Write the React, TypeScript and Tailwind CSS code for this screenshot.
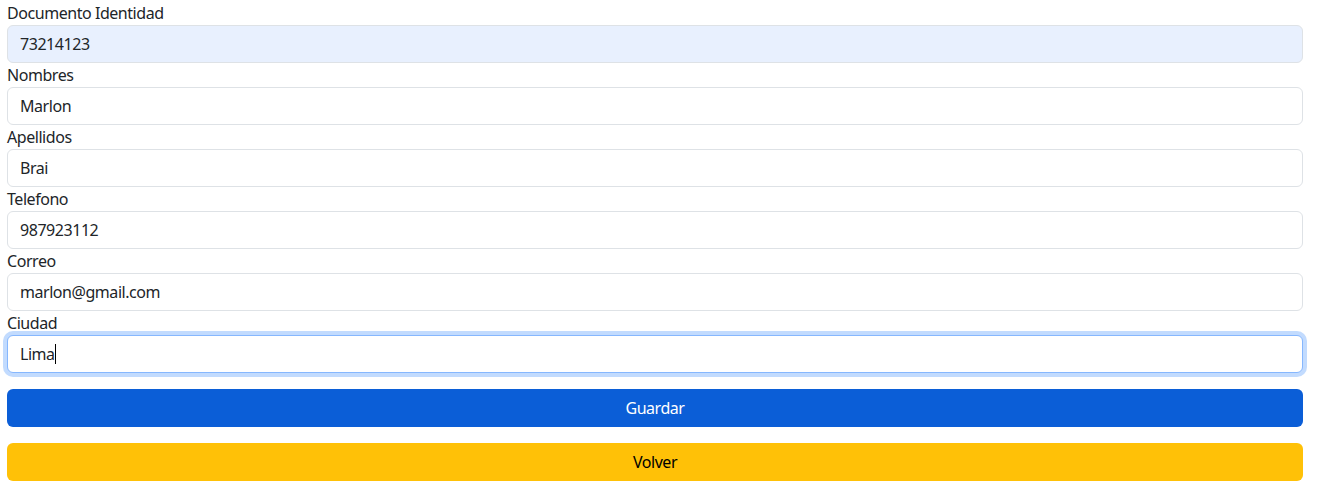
const fields = [
  { label: "Documento Identidad", value: "73214123", autofill: true },
  { label: "Nombres", value: "Marlon" },
  { label: "Apellidos", value: "Brai" },
  { label: "Telefono", value: "987923112" },
  { label: "Correo", value: "marlon@gmail.com" },
];

export default function App() {
  return (
    <div className="w-[1318px] h-[497px] bg-white font-['Noto_Sans',sans-serif] text-[16px] tracking-[-0.45px] text-[#212529]">
      <div className="ml-[7px] mr-[15px] pt-[1px]">
        {fields.map((f) => (
          <div key={f.label}>
            <label className="block leading-[24px]">{f.label}</label>
            <div
              className={
                "h-[38px] border border-[#dee2e6] rounded-[6px] px-[12px] flex items-center leading-[24px] " +
                (f.autofill ? "bg-[#e8f0fe]" : "bg-white")
              }
            >
              {f.value}
            </div>
          </div>
        ))}
        <div>
          <label className="block leading-[24px]">Ciudad</label>
          <div className="h-[38px] border border-[#86b7fe] rounded-[6px] px-[12px] flex items-center leading-[24px] bg-white shadow-[0_0_0_4px_rgba(13,110,253,0.25)]">
            Lima<span className="inline-block w-[1px] h-[20px] bg-black" />
          </div>
        </div>
        <button className="mt-[16px] w-full h-[38px] rounded-[6px] bg-[#0b5ed7] text-white leading-[24px]">
          Guardar
        </button>
        <button className="mt-[16px] w-full h-[38px] rounded-[6px] bg-[#ffc107] text-black leading-[24px] block">
          Volver
        </button>
      </div>
    </div>
  );
}
